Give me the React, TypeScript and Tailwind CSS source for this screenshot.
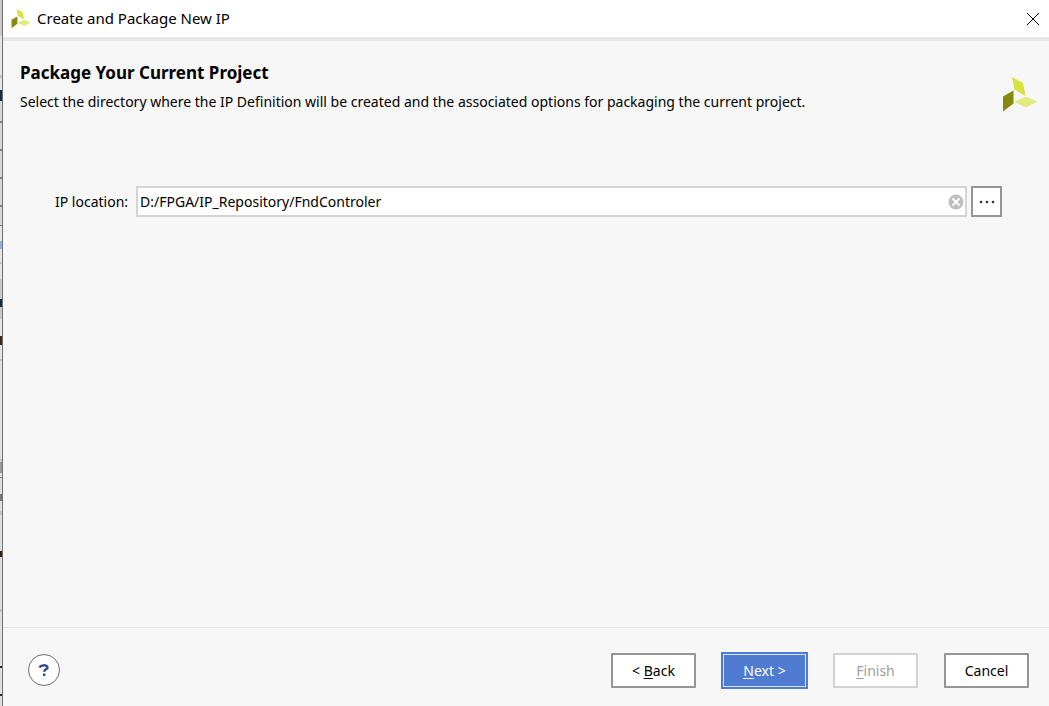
import React, { useState } from 'react'

// Sliver of the main window that shows to the left of the dialog
const behind = [
  'h-[36px] bg-[#c9c9c9]',
  'h-[39px] bg-[#e6e6e6]',
  'h-[3px] bg-[#c9c9c9]',
  'h-[12px] bg-[#e6e6e6]',
  'h-[11px] bg-[#1b2b38]',
  'h-[20px] bg-[#d9d9d9]',
  'h-[2px] bg-[#8f7b6a]',
  'h-[26px] bg-[#d9d9d9]',
  'h-[2px] bg-[#8f7b6a]',
  'h-[26px] bg-[#d9d9d9]',
  'h-[2px] bg-[#8f7b6a]',
  'h-[26px] bg-[#d9d9d9]',
  'h-[2px] bg-[#8f7b6a]',
  'h-[18px] bg-[#d9d9d9]',
  'h-[1px] bg-[#777777]',
  'h-[15px] bg-[#e6e6e6]',
  'h-[8px] bg-[#8bb4e6]',
  'h-[13px] bg-[#e6e6e6]',
  'h-[2px] bg-[#c4c4c4]',
  'h-[15px] bg-[#e6e6e6]',
  'h-[20px] bg-[#c9c9c9]',
  'h-[8px] bg-[#1b2b38]',
  'h-[12px] bg-[#c9c9c9]',
  'h-[17px] bg-[#e6e6e6]',
  'h-[9px] bg-[#3b2a1c]',
  'h-[14px] bg-[#e6e6e6]',
  'h-[2px] bg-[#c4c4c4]',
  'h-[98px] bg-[#e2e2e2]',
  'h-[3px] bg-[#c9c9c9]',
  'h-[11px] bg-[#999999]',
  'h-[4px] bg-[#e0e0e0]',
  'h-[1px] bg-[#777777]',
  'h-[16px] bg-[#e0e0e0]',
  'h-[7px] bg-[#777777]',
  'h-[10px] bg-[#e0e0e0]',
  'h-[4px] bg-[#c4c4c4]',
  'h-[36px] bg-[#e0e0e0]',
  'h-[6px] bg-[#3b1f08]',
  'h-[52px] bg-[#e0e0e0]',
  'h-[3px] bg-[#c4c4c4]',
  'h-[54px] bg-[#e0e0e0]',
  'h-[2px] bg-[#22303c]',
  'h-[26px] bg-[#e0e0e0]',
  'h-[2px] bg-[#22303c]',
]

function Logo({ className }: { className: string }) {
  return (
    <svg className={className} viewBox="0 0 36 36" aria-hidden="true">
      <path d="M10 0L21 6L23.5 19L12.5 12.5Z" fill="#d7e23c" />
      <path d="M1 19.5L11.5 13.5V26.5L1 34.5Z" fill="#858a0a" />
      <path d="M12 25L23.5 19.5L35.5 24.5L24 30.5Z" fill="#e3ea80" />
    </svg>
  )
}

export default function App() {
  const [location, setLocation] = useState('D:/FPGA/IP_Repository/FndControler')

  return (
    <div className="flex h-screen bg-[#f7f7f7] font-['Noto_Sans',sans-serif] text-sm text-black">
      <div className="flex w-[2px] shrink-0 flex-col overflow-hidden bg-[#e0e0e0]">
        {behind.map((c, i) => (
          <div key={i} className={`shrink-0 ${c}`} />
        ))}
      </div>

      <div className="flex min-w-0 flex-1 flex-col border-l border-[#707070]">
        <header className="flex h-[41px] shrink-0 items-center border-b-4 border-[#e6e6e6] bg-white pr-2 pl-2">
          <Logo className="mr-1.5 size-5" />
          <span className="flex-1 text-[15px]">Create and Package New IP</span>
          <button aria-label="Close" className="flex size-4 items-center justify-center">
            <svg className="size-3" viewBox="0 0 12 12" fill="none" stroke="#000" aria-hidden="true">
              <path d="M0 0L12 12M12 0L0 12" />
            </svg>
          </button>
        </header>

        <main className="flex-1">
          <div className="flex justify-between pt-5 pr-[11px] pl-[17px]">
            <div>
              <h1 className="text-[17px] leading-6 font-bold">Package Your Current Project</h1>
              <p className="mt-[7px] leading-5">
                Select the directory where the IP Definition will be created and the associated options for packaging the
                current project.
              </p>
            </div>
            <Logo className="mt-4 size-9 shrink-0" />
          </div>

          <div className="mt-[73px] flex items-center pr-[47px] pl-[52px]">
            <label htmlFor="location" className="mr-2 pt-px">
              IP location:
            </label>
            <div className="flex h-[31px] flex-1 items-center border-2 border-[#d4d4d4] bg-white pr-px">
              <input
                id="location"
                className="min-w-0 flex-1 px-0.5 pt-px outline-none"
                value={location}
                onChange={(e) => setLocation(e.target.value)}
              />
              <button aria-label="Clear" onClick={() => setLocation('')}>
                <svg className="size-4" viewBox="0 0 16 16" aria-hidden="true">
                  <circle cx="8" cy="8" r="7.5" fill="#bfbfbf" />
                  <path d="M4.5 4.5L11.5 11.5M11.5 4.5L4.5 11.5" stroke="#fff" strokeWidth="2" />
                </svg>
              </button>
            </div>
            <button
              aria-label="Browse"
              className="ml-1 flex size-[31px] items-center justify-center border-2 border-[#959595] bg-white"
            >
              <svg className="h-1 w-4" viewBox="0 0 16 4" fill="#333" aria-hidden="true">
                <circle cx="2" cy="2" r="1.3" />
                <circle cx="8" cy="2" r="1.3" />
                <circle cx="14" cy="2" r="1.3" />
              </svg>
            </button>
          </div>
        </main>

        <footer className="flex h-[79px] shrink-0 items-center border-t border-[#e2e2e2] pt-1.5 pr-5 pl-[25px]">
          <button
            aria-label="Help"
            className="mr-auto flex size-8 items-center justify-center rounded-full border border-[#6e6e6e] bg-white"
          >
            <svg className="h-3 w-3" viewBox="0 0 12 12" fill="none" stroke="#2f4b8c" strokeWidth="2.4" aria-hidden="true">
              <path d="M1.5 3.5C2.5 .8 9.5 .4 9.5 3.5C9.5 5.3 6.2 5 6.2 7.8M6.2 9.4V12" />
            </svg>
          </button>
          <div className="flex items-center gap-[25px]">
            <button className="h-[35px] w-[85px] rounded-[1px] border-2 border-[#959595] bg-white pt-0.5">
              &lt; <u className="underline-offset-2">B</u>ack
            </button>
            <button className="h-[37px] w-[87px] border-2 border-[#4f7bd0] bg-[#4f7bd0] pt-0.5 text-white outline-1 -outline-offset-3 outline-[#dbe5f7]">
              <u className="underline-offset-2">N</u>ext &gt;
            </button>
            <button
              disabled
              className="h-[35px] w-[85px] rounded-[1px] border-2 border-[#d2d2d2] bg-white pt-0.5 text-[#a0a0a0]"
            >
              <u className="underline-offset-2">F</u>inish
            </button>
          </div>
          <button className="ml-[26px] h-[35px] w-[85px] rounded-[1px] border-2 border-[#959595] bg-white pt-0.5">
            Cancel
          </button>
        </footer>
      </div>
    </div>
  )
}
